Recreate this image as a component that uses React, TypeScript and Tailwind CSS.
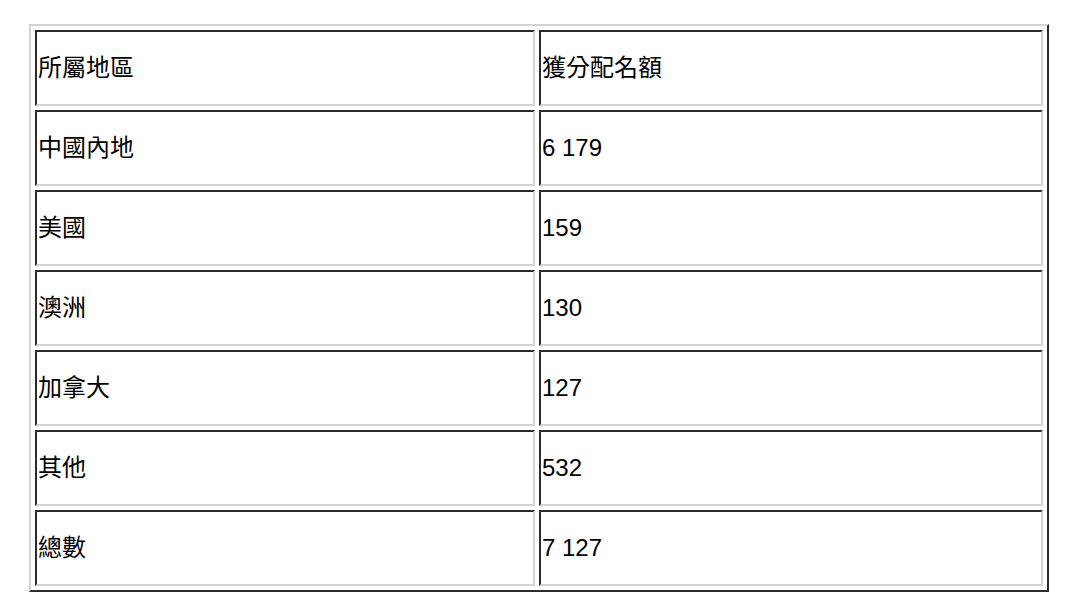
const rows: [string, string][] = [
  ["所屬地區", "獲分配名額"],
  ["中國內地", "6 179"],
  ["美國", "159"],
  ["澳洲", "130"],
  ["加拿大", "127"],
  ["其他", "532"],
  ["總數", "7 127"],
];

const cell =
  "h-[76px] flex items-center px-px border-2 border-t-[#2b2b2b] border-l-[#2b2b2b] border-b-[#d3d3d3] border-r-[#d3d3d3] text-[24px] text-black";

export default function App() {
  return (
    <div
      className="min-h-screen bg-white pt-[24px] pl-[29px]"
      style={{ fontFamily: '"Liberation Sans", "Noto Sans CJK TC", sans-serif' }}
    >
      <div className="w-[1020px] grid grid-cols-[500px_504px] gap-1 p-1 border-2 border-t-[#d3d3d3] border-l-[#d3d3d3] border-b-[#2b2b2b] border-r-[#2b2b2b]">
        {rows.map(([region, quota]) => (
          <div key={region} className="contents">
            <div className={cell}>{region}</div>
            <div className={cell}>{quota}</div>
          </div>
        ))}
      </div>
    </div>
  );
}
